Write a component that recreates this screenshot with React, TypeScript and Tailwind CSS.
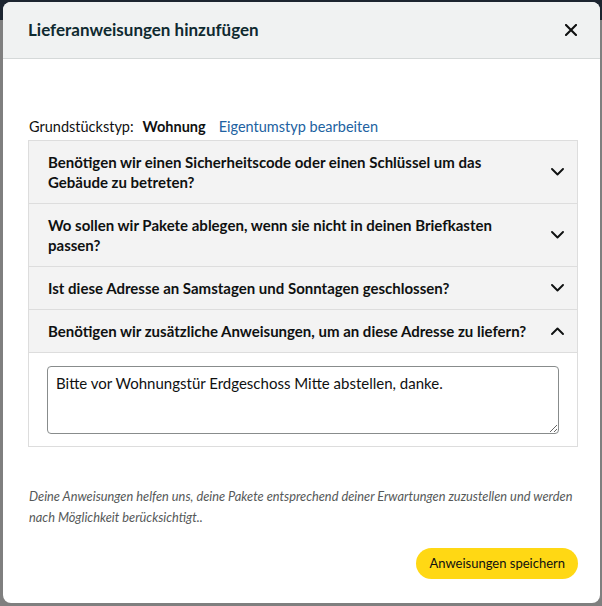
import React, { useState } from 'react';

const questions = [
  { id: 'q1', text: 'Benötigen wir einen Sicherheitscode oder einen Schlüssel um das Gebäude zu betreten?' },
  { id: 'q2', text: 'Wo sollen wir Pakete ablegen, wenn sie nicht in deinen Briefkasten passen?' },
  { id: 'q3', text: 'Ist diese Adresse an Samstagen und Sonntagen geschlossen?' },
  { id: 'q4', text: 'Benötigen wir zusätzliche Anweisungen, um an diese Adresse zu liefern?' },
];

const Chevron: React.FC<{ up?: boolean }> = ({ up }) => (
  <svg width="13" height="8" viewBox="0 0 13 8" className="shrink-0" fill="none">
    <path
      d={up ? 'M1 7 L6.5 1.5 L12 7' : 'M1 1 L6.5 6.5 L12 1'}
      stroke="#0f1111"
      strokeWidth="1.9"
      strokeLinecap="round"
      strokeLinejoin="round"
    />
  </svg>
);

const App: React.FC = () => {
  const [open, setOpen] = useState('q4');
  const [note, setNote] = useState('Bitte vor Wohnungstür Erdgeschoss Mitte abstellen, danke.');

  return (
    <div className="w-[602px] h-[606px] overflow-hidden bg-[linear-gradient(#1c2530_0_20px,#7f7f7f_20px)] pt-[2px] pl-[3px] font-['Lato','Liberation_Sans',sans-serif] text-[#0f1111]">
      <div className="w-[597px] h-[601px] bg-white rounded-lg overflow-hidden flex flex-col">
        {/* header */}
        <div className="h-[57px] shrink-0 bg-[#f0f2f2] border-b border-[#d5d9d9] flex items-center justify-between pl-[25px] pr-[19px]">
          <h2 className="text-[17px] font-bold text-[#0f2a30]">Lieferanweisungen hinzufügen</h2>
          <button className="w-[20px] h-[20px] flex items-center justify-center">
            <svg width="12" height="12" viewBox="0 0 12 12">
              <path d="M1 1 L11 11 M11 1 L1 11" stroke="#0f1111" strokeWidth="2.1" strokeLinecap="square" />
            </svg>
          </button>
        </div>

        <div className="pl-[25px] pr-[22px] pt-[58px] flex flex-col">
          <div className="pl-[1px] text-[14.5px] leading-[20px] flex items-center">
            <span>Grundstückstyp:</span>
            <span className="font-bold ml-[9px]">Wohnung</span>
            <a className="ml-[13px] text-[#2162a1] cursor-pointer">Eigentumstyp bearbeiten</a>
          </div>

          {/* accordion */}
          <div className="mt-[3px] border border-[#dddddd] border-b-0">
            {questions.map(q => {
              const isOpen = open === q.id;
              return (
                <div key={q.id} className="border-b border-[#dddddd]">
                  <button
                    onClick={() => setOpen(isOpen ? '' : q.id)}
                    className="w-full bg-[#f3f3f3] flex items-center justify-between gap-[20px] pl-[19px] pr-[13px] py-[11px] text-left"
                  >
                    <span className="text-[15px] leading-[20px] font-bold">{q.text}</span>
                    <Chevron up={isOpen} />
                  </button>
                  {isOpen && (
                    <div className="bg-white border-t border-[#dddddd] pt-[13px] pb-[12px] pl-[18px] pr-[18px]">
                      <textarea
                        value={note}
                        onChange={e => setNote(e.target.value)}
                        className="block w-full h-[68px] border border-[#888c8c] rounded-[4px] px-[8px] py-[6px] text-[15px] leading-[20px] text-[#0f1111] outline-none resize-y"
                      />
                    </div>
                  )}
                </div>
              );
            })}
          </div>

          <p className="mt-[39px] pl-[1px] text-[12.8px] leading-[21px] italic text-[#565959]">
            Deine Anweisungen helfen uns, deine Pakete entsprechend deiner Erwartungen zuzustellen und werden nach Möglichkeit berücksichtigt..
          </p>

          <div className="flex justify-end mt-[20px]">
            <button className="h-[31px] px-[13px] rounded-full bg-[#ffd814] text-[13px] text-[#0f1111]">
              Anweisungen speichern
            </button>
          </div>
        </div>
      </div>
    </div>
  );
};

export default App;
